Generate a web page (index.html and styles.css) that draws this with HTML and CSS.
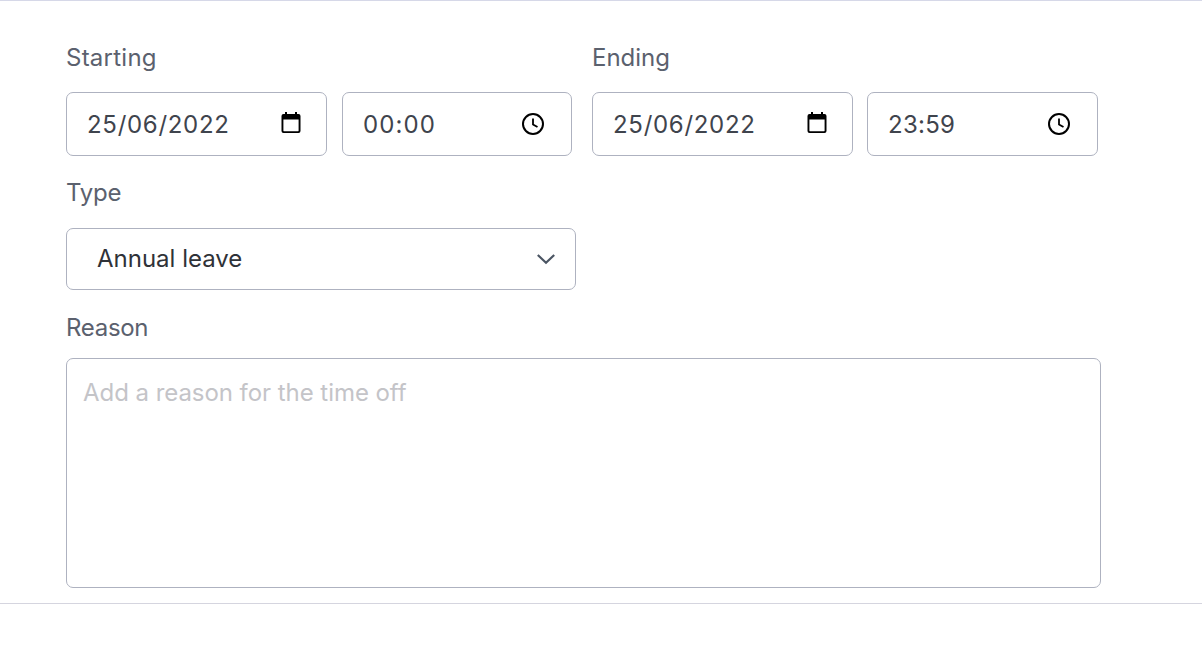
FILE: index.html
```html
<!DOCTYPE html>
<html lang="en">
<head>
<meta charset="utf-8">
<title>Time off</title>
<link rel="stylesheet" href="styles.css">
</head>
<body>
<form class="form">
  <div class="when">
    <div class="group">
      <div class="label starting">Starting</div>
      <div class="pair">
        <div class="field date"><span>25/06/2022</span>
          <svg class="cal" viewBox="0 0 24 24" width="24" height="24"><path d="M6 0h2v2h8V0h2v2h1.5a2 2 0 0 1 2 2v15a2 2 0 0 1-2 2h-15a2 2 0 0 1-2-2V4a2 2 0 0 1 2-2H6zM4.4 7.5v11.2c0 .3.2.5.5.5h14.2c.3 0 .5-.2.5-.5V7.500z"/></svg>
        </div>
        <div class="field time"><span>00:00</span>
          <svg class="clock" viewBox="0 0 24 24" width="24" height="24"><circle cx="12" cy="12" r="10" fill="none" stroke="#000" stroke-width="2"/><path d="M12 6.500V12.400l4.500 2.700" fill="none" stroke="#000" stroke-width="1.800"/></svg>
        </div>
      </div>
    </div>
    <div class="group">
      <div class="label">Ending</div>
      <div class="pair">
        <div class="field date"><span>25/06/2022</span>
          <svg class="cal" viewBox="0 0 24 24" width="24" height="24"><path d="M6 0h2v2h8V0h2v2h1.5a2 2 0 0 1 2 2v15a2 2 0 0 1-2 2h-15a2 2 0 0 1-2-2V4a2 2 0 0 1 2-2H6zM4.4 7.5v11.2c0 .3.2.5.5.5h14.2c.3 0 .5-.2.5-.5V7.500z"/></svg>
        </div>
        <div class="field time"><span>23:59</span>
          <svg class="clock" viewBox="0 0 24 24" width="24" height="24"><circle cx="12" cy="12" r="10" fill="none" stroke="#000" stroke-width="2"/><path d="M12 6.500V12.400l4.500 2.700" fill="none" stroke="#000" stroke-width="1.800"/></svg>
        </div>
      </div>
    </div>
  </div>
  <div class="label type-label">Type</div>
  <div class="select">
    <span>Annual leave</span>
    <svg viewBox="0 0 20 20" width="20" height="20"><path d="M1.800 6 10 13.800 18.200 6" fill="none" stroke="#4b5563" stroke-width="2.200"/></svg>
  </div>
  <div class="label reason-label">Reason</div>
  <textarea class="reason" placeholder="Add a reason for the time off"></textarea>
</form>
</body>
</html>
```
FILE: styles.css
```css
* { box-sizing: border-box; }
html, body { margin: 0; padding: 0; background: #fff; }
body {
  width: 1202px;
  height: 648px;
  overflow: hidden;
  border-top: 1px solid #d6d8e8;
  font-family: Inter, "Liberation Sans", sans-serif;
  font-size: 24px;
  color: #3f444d;
}
.form { padding: 41px 0 0 66px; height: 603px; border-bottom: 1px solid #d5d5df; }
.when { display: flex; gap: 20px; }
.label { color: #5b616e; font-size: 24px; line-height: 32px; }
.starting { letter-spacing: 0.25px; }
.pair { display: flex; gap: 14px; margin-top: 18px; }
.group:first-child .pair { gap: 15px; }
.field {
  display: flex;
  align-items: center;
  justify-content: space-between;
  height: 64px;
  padding: 1px 26px 0 20px;
  border: 1px solid #aeb2c0;
  border-radius: 7px;
}
.date { width: 261px; padding-right: 23px; letter-spacing: 0.7px; }
.time { width: 230px; letter-spacing: 1.1px; }
.group:last-child .time { width: 231px; letter-spacing: 0.25px; }
.cal { margin-top: -1px; }
.clock { margin-top: -1px; }
.type-label { margin-top: 21px; letter-spacing: -0.2px; }
.select {
  display: flex;
  align-items: center;
  justify-content: space-between;
  width: 510px;
  height: 62px;
  margin-top: 19px;
  padding: 0 19px 2px 30px;
  border: 1px solid #aeb2c0;
  border-radius: 7px;
  color: #2f3238;
}
.select svg { margin-top: 2px; }
.reason-label { margin-top: 22px; letter-spacing: -0.3px; }
.reason {
  display: block;
  width: 1035px;
  height: 230px;
  margin-top: 14px;
  padding: 18px 16px 0;
  border: 1px solid #aeb2c0;
  border-radius: 7px;
  font: inherit;
  line-height: 32px;
  letter-spacing: -0.05px;
  resize: none;
  outline: none;
}
.reason::placeholder { color: #c4c4c8; opacity: 1; }
```
